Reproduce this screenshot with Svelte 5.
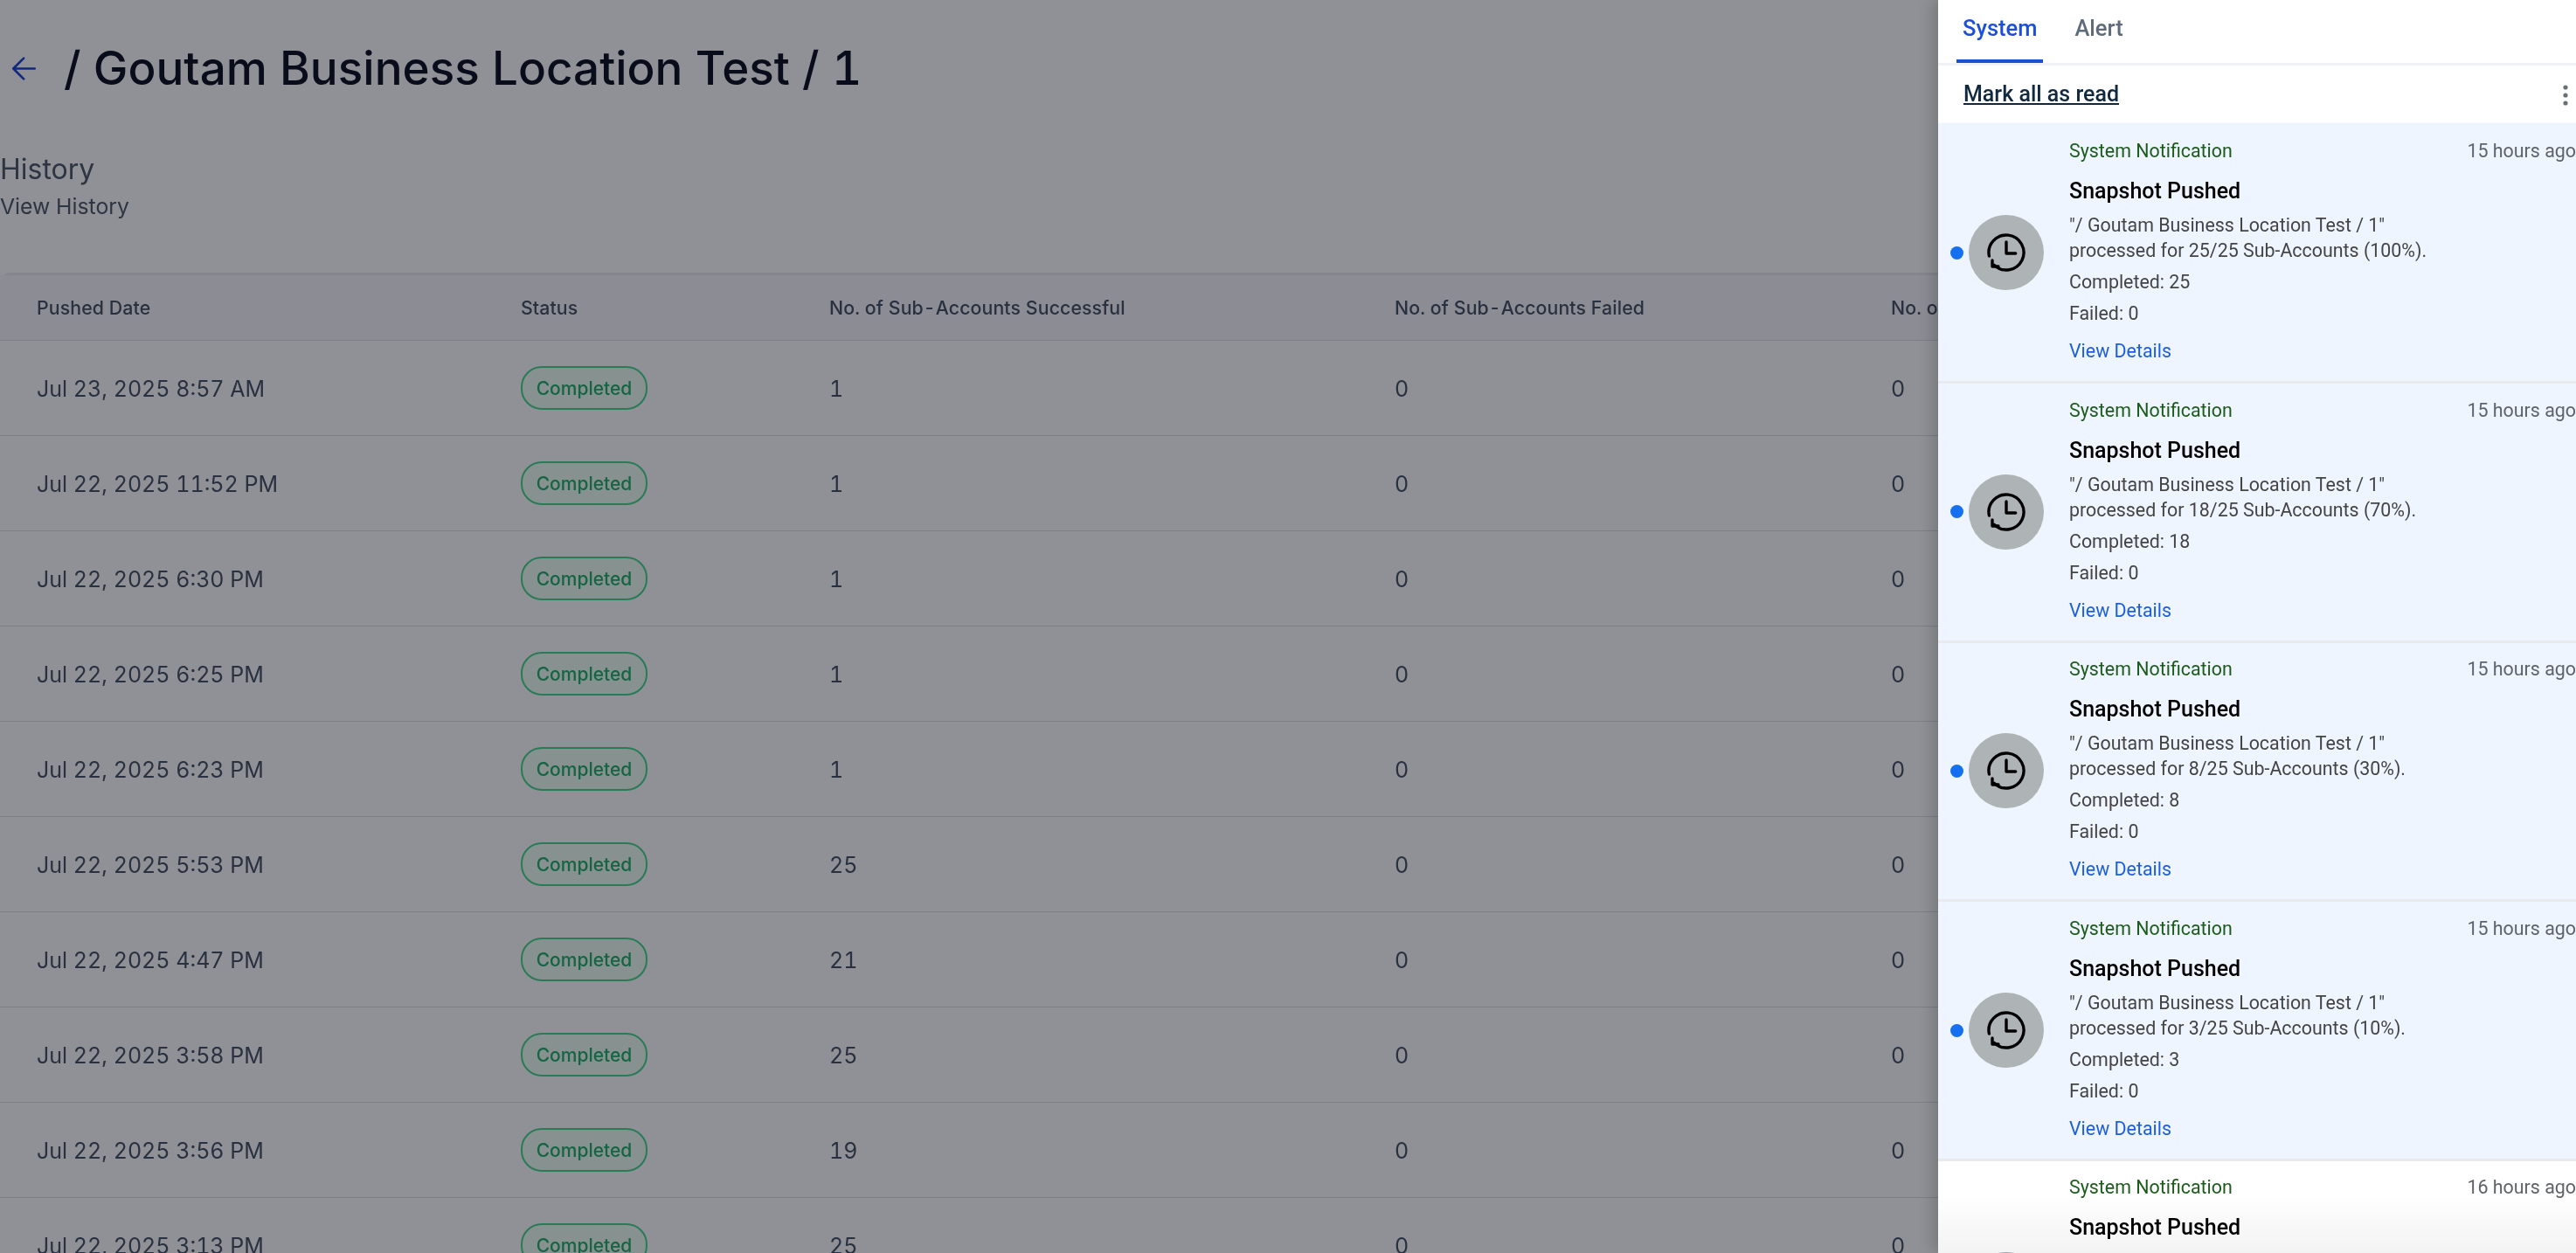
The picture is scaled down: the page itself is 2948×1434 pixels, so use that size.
<script>
  const rows = [
    ['Jul 23, 2025 8:57 AM', '1'], ['Jul 22, 2025 11:52 PM', '1'], ['Jul 22, 2025 6:30 PM', '1'],
    ['Jul 22, 2025 6:25 PM', '1'], ['Jul 22, 2025 6:23 PM', '1'], ['Jul 22, 2025 5:53 PM', '25'],
    ['Jul 22, 2025 4:47 PM', '21'], ['Jul 22, 2025 3:58 PM', '25'], ['Jul 22, 2025 3:56 PM', '19'],
    ['Jul 22, 2025 3:13 PM', '25']
  ];
  const notes = [
    { time: '15 hours ago', text: '25/25 Sub-Accounts (100%).', done: 25, unread: true },
    { time: '15 hours ago', text: '18/25 Sub-Accounts (70%).', done: 18, unread: true },
    { time: '15 hours ago', text: '8/25 Sub-Accounts (30%).', done: 8, unread: true },
    { time: '15 hours ago', text: '3/25 Sub-Accounts (10%).', done: 3, unread: true },
    { time: '16 hours ago', text: '1/25 Sub-Accounts (4%).', done: 1, unread: false }
  ];
</script>

<div class="screen">
  <main class="page">
    <div class="titlebar">
      <svg class="back" viewBox="0 0 20 20" width="35" height="35" fill="none" stroke="#1d48d0" stroke-width="1.5" stroke-linecap="round" stroke-linejoin="round">
        <path d="M17 10H3M9.8 3.2 3 10l6.8 6.8" />
      </svg>
      <h1>/ Goutam Business Location Test / 1</h1>
    </div>
    <section class="intro">
      <h2>History</h2>
      <p>View History</p>
    </section>
    <div class="table">
      <div class="row head">
        <div>Pushed Date</div><div>Status</div><div>No. of Sub-Accounts Successful</div><div>No. of Sub-Accounts Failed</div><div>No. of Sub-Accounts Pending</div>
      </div>
      {#each rows as r}
        <div class="row">
          <div>{r[0]}</div>
          <div><span class="badge">Completed</span></div>
          <div>{r[1]}</div>
          <div>0</div>
          <div>0</div>
        </div>
      {/each}
    </div>
  </main>

  <div class="overlay"></div>

  <aside class="panel">
    <div class="tabs">
      <button class="tab active">System</button>
      <button class="tab">Alert</button>
    </div>
    <div class="actions">
      <button class="markall">Mark all as read</button>
      <svg class="kebab" width="8" height="28" viewBox="0 0 8 28" fill="#6b7075"><circle cx="4" cy="5" r="2.6" /><circle cx="4" cy="14" r="2.6" /><circle cx="4" cy="23" r="2.6" /></svg>
    </div>
    {#each notes as n}
      <article class="note" class:unread={n.unread}>
        <div class="lead">
          <span class="dot" class:on={n.unread}></span>
          <span class="avatar">
            <svg viewBox="-24 -24 48 48" width="48" height="48" fill="none" stroke="#000" stroke-width="3.4" stroke-linecap="round" stroke-linejoin="round">
              <path d="M-19.6 4A20 20 0 1 1-14 14.3" />
              <path d="M-16 9V16H-9" />
              <path d="M0-12V1H10.7" />
            </svg>
          </span>
        </div>
        <div class="body">
          <div class="meta"><span class="kind">System Notification</span><span class="time">{n.time}</span></div>
          <div class="name">Snapshot Pushed</div>
          <div class="desc">"/ Goutam Business Location Test / 1"<br />processed for {n.text}</div>
          <div class="stat first">Completed: {n.done}</div>
          <div class="stat">Failed: 0</div>
          <a class="details" href="#top">View Details</a>
        </div>
      </article>
    {/each}
    <div class="fade"></div>
  </aside>
</div>

<style>
  :global(body) { margin: 0; background: #f9fafb; }
  .screen { position: relative; width: 2948px; height: 1434px; overflow: hidden; font-family: Inter, "Liberation Sans", sans-serif; background: #f9fafb; }
  .page { width: 100%; font-variant-numeric: tabular-nums; }
  .titlebar { display: flex; align-items: center; height: 156px; padding-left: 10px; gap: 28px; }
  .back { flex: none; }
  h1 { margin: 0; font-size: 53px; font-weight: 500; color: #101828; white-space: nowrap; line-height: 68px; }
  .intro { height: 156px; }
  h2 { margin: 0; font-size: 32px; font-weight: 400; line-height: 40px; padding-top: 18px; color: #4f5b6c; }
  .intro p { margin: 0; font-size: 24.8px; line-height: 40px; padding-top: 2px; color: #4f5b6c; }
  .table { border-top: 3px solid #e4e5ec; border-top-left-radius: 12px; }
  .row { display: grid; grid-template-columns: 554px 353px 647px 568px 826px; height: 106px; padding-top: 2px; border-bottom: 1px solid #d9dae2; align-items: center; font-size: 25px; color: #475467; }
  .row > div { padding-left: 42px; white-space: nowrap; }
  .row.head { height: 74px; padding-top: 0; background: #f2f3f9; font-size: 21.3px; font-weight: 500; letter-spacing: .1px; }
  .badge { display: inline-flex; align-items: center; justify-content: center; width: 145px; height: 50px; box-sizing: border-box; border: 2px solid #47d48e; border-radius: 24px; background: #e7faf2; color: #25ad6e; font-size: 21px; font-weight: 500; transform: translateY(-1px); }

  .overlay { position: absolute; inset: 0; background: rgba(0, 0, 10, .42); }

  .panel { position: absolute; top: 0; right: 0; width: 730px; height: 1434px; overflow: hidden; background: #fff; box-shadow: -6px 0 16px rgba(0, 0, 0, .18); font-family: Roboto, "Liberation Sans", sans-serif; }
  .tabs { display: flex; height: 72px; border-bottom: 3px solid #f0f2f5; padding-left: 21px; gap: 29px; }
  .tab { border: 0; background: none; padding: 0 7px; height: 72px; font: 500 25.5px Roboto, sans-serif; color: #5f6b7a; border-bottom: 4px solid transparent; box-sizing: border-box; padding-bottom: 4px; }
  .tab.active { color: #1d4ed8; border-bottom-color: #1d4ed8; }
  .actions { display: flex; align-items: center; justify-content: space-between; height: 67.5px; padding-left: 29px; padding-right: 8px; }
  .markall { border: 0; background: none; padding: 0 0 2.5px; font: 500 25px Roboto, sans-serif; color: #10293f; text-decoration: underline; }
  .note { display: flex; height: 293.6px; border-bottom: 3px solid #e8eaed; background: #fff; }
  .note.unread { background: #eff5ff; }
  .note:first-of-type { box-shadow: 0 -2.5px 0 #eff5ff; }
  .lead { display: flex; align-items: center; width: 150px; padding-left: 13.5px; gap: 6.5px; flex: none; box-sizing: border-box; }
  .dot { width: 15px; height: 15px; border-radius: 50%; flex: none; }
  .dot.on { background: #1570ef; }
  .avatar { width: 86px; height: 86px; border-radius: 50%; background: #aeb4b6; display: grid; place-items: center; flex: none; }
  .body { flex: 1; padding-top: 14.5px; }
  .meta { display: flex; justify-content: space-between; font-size: 21.4px; line-height: 32px; }
  .kind { color: #1d5b1d; }
  .time { color: #5f6368; }
  .name { font-size: 25px; font-weight: 500; line-height: 34px; margin-top: 13px; color: #000; }
  .desc { font-size: 21.4px; line-height: 29px; color: #444; margin-top: 7px; }
  .stat { font-size: 21.4px; line-height: 36px; color: #444; }
  .stat.first { margin-top: 4px; }
  .details { display: block; font-size: 21.4px; line-height: 32px; color: #1d5fdb; text-decoration: none; margin-top: 9px; }
  .fade { position: absolute; left: 0; right: 0; bottom: 0; height: 70px; background: linear-gradient(#fff, #f3f3f3); mix-blend-mode: multiply; }
</style>
